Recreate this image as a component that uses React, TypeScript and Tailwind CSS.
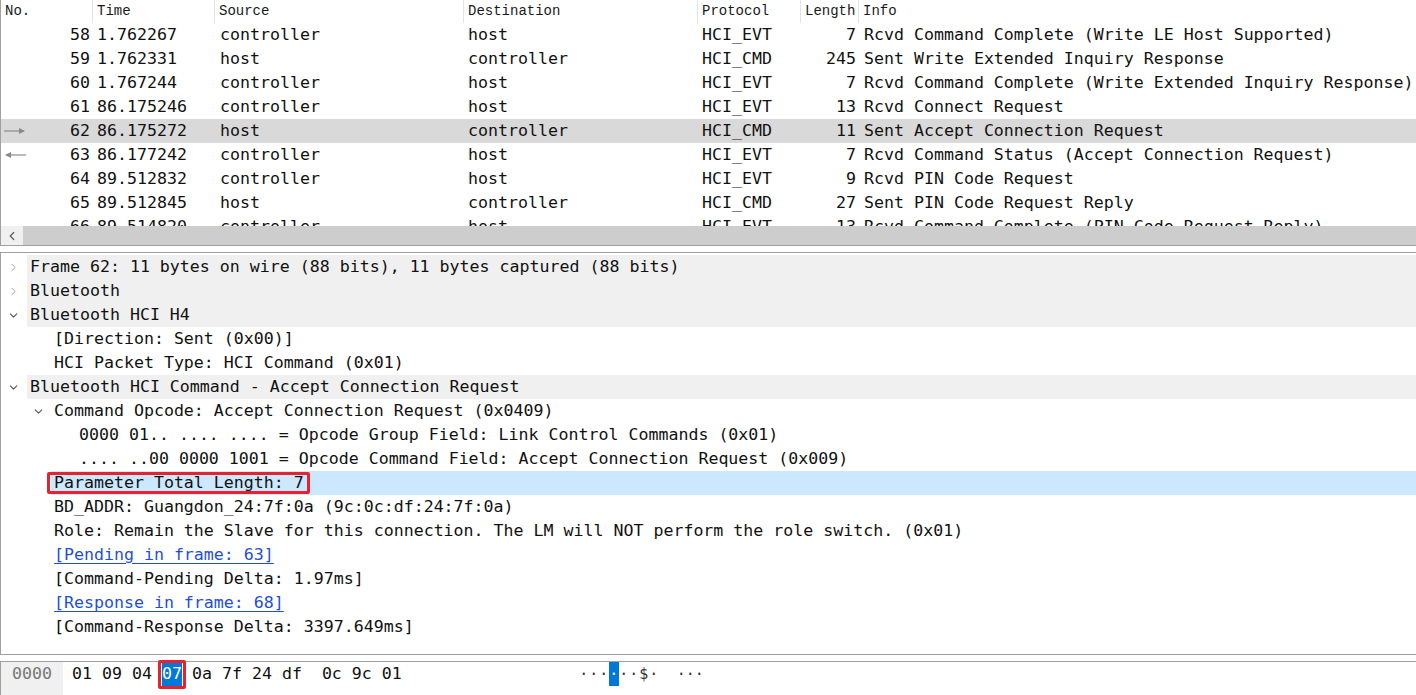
import { ChevronDown, ChevronLeft, ChevronRight } from "lucide-react";

type Packet = {
  no: number;
  time: string;
  src: string;
  dst: string;
  proto: string;
  len: number;
  info: string;
  mark?: "out" | "in";
  selected?: boolean;
};

const packets: Packet[] = [
  { no: 58, time: "1.762267", src: "controller", dst: "host", proto: "HCI_EVT", len: 7, info: "Rcvd Command Complete (Write LE Host Supported)" },
  { no: 59, time: "1.762331", src: "host", dst: "controller", proto: "HCI_CMD", len: 245, info: "Sent Write Extended Inquiry Response" },
  { no: 60, time: "1.767244", src: "controller", dst: "host", proto: "HCI_EVT", len: 7, info: "Rcvd Command Complete (Write Extended Inquiry Response)" },
  { no: 61, time: "86.175246", src: "controller", dst: "host", proto: "HCI_EVT", len: 13, info: "Rcvd Connect Request" },
  { no: 62, time: "86.175272", src: "host", dst: "controller", proto: "HCI_CMD", len: 11, info: "Sent Accept Connection Request", mark: "out", selected: true },
  { no: 63, time: "86.177242", src: "controller", dst: "host", proto: "HCI_EVT", len: 7, info: "Rcvd Command Status (Accept Connection Request)", mark: "in" },
  { no: 64, time: "89.512832", src: "controller", dst: "host", proto: "HCI_EVT", len: 9, info: "Rcvd PIN Code Request" },
  { no: 65, time: "89.512845", src: "host", dst: "controller", proto: "HCI_CMD", len: 27, info: "Sent PIN Code Request Reply" },
  { no: 66, time: "89.514820", src: "controller", dst: "host", proto: "HCI_EVT", len: 13, info: "Rcvd Command Complete (PIN Code Request Reply)" },
];

const cols = "grid grid-cols-[92px_122px_249px_234px_103px_58px_1fr]";

function Mark({ dir }: { dir?: "out" | "in" }) {
  if (!dir) return null;
  return (
    <svg className="absolute left-[3px] top-[7px]" width="22" height="10" viewBox="0 0 22 10">
      {dir === "out" ? (
        <>
          <line x1="0" y1="5" x2="20" y2="5" stroke="#8a8a8a" strokeWidth="1.2" />
          <path d="M15 2 L21 5 L15 8 Z" fill="#8a8a8a" />
        </>
      ) : (
        <>
          <line x1="2" y1="5" x2="22" y2="5" stroke="#8a8a8a" strokeWidth="1.2" />
          <path d="M7 2 L1 5 L7 8 Z" fill="#8a8a8a" />
        </>
      )}
    </svg>
  );
}

function PacketList() {
  const heads = ["No.", "Time", "Source", "Destination", "Protocol", "Length", "Info"];
  return (
    <div className="h-[246px] shrink-0 border-l border-b border-[#a0a0a0] flex flex-col">
      {/* Header */}
      <div className={`${cols} h-[23px] shrink-0 text-[14px] font-['Liberation_Mono',monospace] text-[#1a1a1a]`}>
        {heads.map((h, i) => (
          <div
            key={h}
            className={`flex items-center pl-[4px] ${i < heads.length - 1 ? "border-r border-[#e3e3e3]" : ""}`}
          >
            {h}
          </div>
        ))}
      </div>

      {/* Rows */}
      <div className="flex-1 overflow-hidden text-[16.6px]">
        {packets.map((p) => (
          <div key={p.no} className={`${cols} relative h-[24px] leading-[24px] ${p.selected ? "bg-[#d9d9d9]" : ""}`}>
            <Mark dir={p.mark} />
            <div className="text-right pr-[3px]">{p.no}</div>
            <div className="pl-[4px]">{p.time}</div>
            <div className="pl-[5px]">{p.src}</div>
            <div className="pl-[4px]">{p.dst}</div>
            <div className="pl-[4px]">{p.proto}</div>
            <div className="text-right pr-[3px]">{p.len}</div>
            <div className="pl-[5px] whitespace-pre">{p.info}</div>
          </div>
        ))}
      </div>

      {/* Horizontal scrollbar */}
      <div className="h-[19px] shrink-0 flex">
        <div className="w-[22px] bg-[#f0f0f0] flex items-center justify-center">
          <ChevronLeft size={14} strokeWidth={2.2} className="text-[#606060]" />
        </div>
        <div className="flex-1 bg-[#cdcdcd]" />
      </div>
    </div>
  );
}

type Node = {
  text: string;
  level: number;
  top?: boolean;
  chevron?: "right" | "down";
  link?: boolean;
  selected?: boolean;
};

const tree: Node[] = [
  { text: "Frame 62: 11 bytes on wire (88 bits), 11 bytes captured (88 bits)", level: 0, top: true, chevron: "right" },
  { text: "Bluetooth", level: 0, top: true, chevron: "right" },
  { text: "Bluetooth HCI H4", level: 0, top: true, chevron: "down" },
  { text: "[Direction: Sent (0x00)]", level: 1 },
  { text: "HCI Packet Type: HCI Command (0x01)", level: 1 },
  { text: "Bluetooth HCI Command - Accept Connection Request", level: 0, top: true, chevron: "down" },
  { text: "Command Opcode: Accept Connection Request (0x0409)", level: 1, chevron: "down" },
  { text: "0000 01.. .... .... = Opcode Group Field: Link Control Commands (0x01)", level: 2 },
  { text: ".... ..00 0000 1001 = Opcode Command Field: Accept Connection Request (0x009)", level: 2 },
  { text: "Parameter Total Length: 7", level: 1, selected: true },
  { text: "BD_ADDR: Guangdon_24:7f:0a (9c:0c:df:24:7f:0a)", level: 1 },
  { text: "Role: Remain the Slave for this connection. The LM will NOT perform the role switch. (0x01)", level: 1 },
  { text: "[Pending in frame: 63]", level: 1, link: true },
  { text: "[Command-Pending Delta: 1.97ms]", level: 1 },
  { text: "[Response in frame: 68]", level: 1, link: true },
  { text: "[Command-Response Delta: 3397.649ms]", level: 1 },
];

function Details() {
  const indent = ["pl-[26px]", "pl-[50px]", "pl-[75px]"];
  return (
    <div className="h-[403px] shrink-0 pt-[2px] border-t border-l border-b border-[#a0a0a0] text-[16.6px] overflow-hidden">
      {tree.map((n, i) => (
        <div key={i} className={`relative h-[24px] leading-[24px] ${indent[n.level]}`}>
          {n.chevron && (
            <span className={`absolute top-[6px] ${n.level === 0 ? "left-[6px]" : "left-[31px]"}`}>
              {n.chevron === "right" ? (
                <ChevronRight size={13} strokeWidth={1.8} className="text-[#a6a6a6]" />
              ) : (
                <ChevronDown size={13} strokeWidth={2} className="text-[#555555]" />
              )}
            </span>
          )}
          <div
            className={`h-full pl-[3px] whitespace-pre ${n.top ? "bg-[#f0f0f0]" : ""} ${n.selected ? "bg-[#cce8ff]" : ""}`}
          >
            {n.link ? (
              <span className="text-[#1f4fd8] underline underline-offset-[3px]">{n.text}</span>
            ) : n.selected ? (
              <span className="relative">
                {n.text}
                <span className="absolute -left-[7px] -right-[6px] -top-[1px] -bottom-[2px] border-[3px] border-[#e5222e] rounded-[2px]" />
              </span>
            ) : (
              n.text
            )}
          </div>
        </div>
      ))}
    </div>
  );
}

function Bytes() {
  const hex = ["01", "09", "04", "07", "0a", "7f", "24", "df"];
  const hex2 = ["0c", "9c", "01"];
  const ascii = ["·", "·", "·", "·", "·", "·", "$", "·"];
  return (
    <div className="flex-1 border-t border-l border-[#a0a0a0] flex text-[16.6px]">
      <div className="w-[62px] bg-[#f0f0f0] text-[#777777] pl-[11px] leading-[24px]">0000</div>
      <div className="flex pl-[9px] leading-[24px] h-[24px]">
        {hex.map((h, i) => (
          <span key={i} className="relative mr-[10px]">
            {i === 3 ? (
              <>
                <span className="bg-[#0078d7] text-white inline-block">{h}</span>
                <span className="absolute -left-[4px] -right-[4px] -top-[2px] -bottom-[3px] border-[3px] border-[#e5222e] rounded-[2px]" />
              </>
            ) : (
              h
            )}
          </span>
        ))}
        <span className="w-[10px]" />
        {hex2.map((h, i) => (
          <span key={i} className="mr-[10px]">
            {h}
          </span>
        ))}
      </div>
      <div className="flex pl-[167px] leading-[24px] h-[24px] text-[15px] text-[#333333]">
        {ascii.map((c, i) => (
          <span key={i} className={`w-[10px] text-center ${i === 3 ? "bg-[#0078d7] text-white" : ""}`}>
            {c}
          </span>
        ))}
        <span className="w-[18px]" />
        {["·", "·", "·"].map((c, i) => (
          <span key={i} className="w-[9px] text-center">
            {c}
          </span>
        ))}
      </div>
    </div>
  );
}

export default function App() {
  return (
    <div className="w-[1416px] h-[695px] overflow-hidden bg-white flex flex-col font-['DejaVu_Sans_Mono','Liberation_Mono',monospace] text-[#111111]">
      <PacketList />
      <div className="h-[6px] shrink-0" />
      <Details />
      <div className="h-[6px] shrink-0" />
      <Bytes />
    </div>
  );
}
